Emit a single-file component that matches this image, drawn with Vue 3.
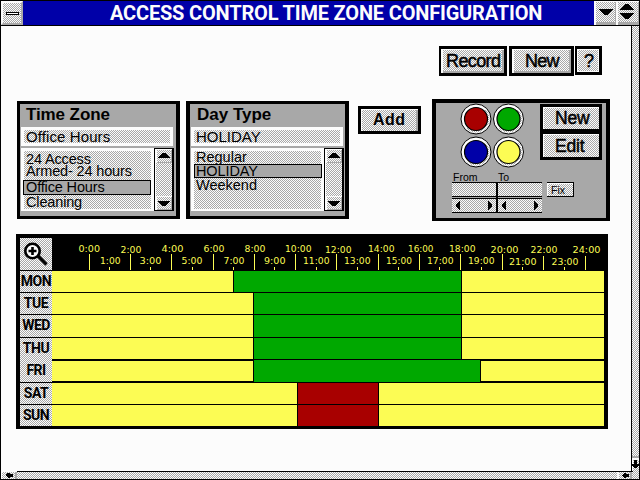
<script setup>
const zones = [
  { name: '24 Access', gap: 1 },
  { name: 'Armed- 24 hours', gap: -3 },
  { name: 'Office Hours', gap: 1, selected: true },
  { name: 'Cleaning', gap: 0 },
]
const dayTypes = [
  { name: 'Regular', gap: -1 },
  { name: 'HOLIDAY', gap: -1, selected: true },
  { name: 'Weekend', gap: 0 },
]
const lists = [
  { id: 'zones', title: 'Time Zone', value: 'Office Hours', items: zones },
  { id: 'types', title: 'Day Type', value: 'HOLIDAY', items: dayTypes },
]

const colors = [
  { name: 'red', fill: '#a80000', x: 16, y: 16 },
  { name: 'green', fill: '#00a800', x: 48.5, y: 16 },
  { name: 'blue', fill: '#0000a8', x: 16, y: 49 },
  { name: 'yellow', fill: '#fcfc54', x: 48.5, y: 49 },
]

// Axis marks: [label, left, width, tick x, vertical shift]
const major = [
  ['0:00', 78.5, 21.5, 89, 0], ['2:00', 120.5, 21, 130, 1], ['4:00', 161.5, 22, 171, 0],
  ['6:00', 203.5, 21, 213, 0], ['8:00', 244.5, 21, 254, 0], ['10:00', 285, 26.5, 295, 0],
  ['12:00', 325, 26.5, 336, 1], ['14:00', 368, 26.5, 378, 0], ['16:00', 408, 25.5, 419, 0],
  ['18:00', 449, 26.5, 460, 0], ['20:00', 490.5, 28, 502, 1], ['22:00', 530.5, 27, 543, 1],
  ['24:00', 572.5, 28, 585, 1],
]
const minor = [
  ['1:00', 100, 20.5, 109, 0], ['3:00', 139.5, 22, 150, 0], ['5:00', 181.5, 21, 192, 0],
  ['7:00', 223.5, 21, 233, 0], ['9:00', 264, 21.5, 274, 0], ['11:00', 303, 26.5, 316, 0],
  ['13:00', 344, 26.5, 357, 0], ['15:00', 386, 26, 398, 0], ['17:00', 427, 26.5, 439, 0],
  ['19:00', 468, 26.5, 481, 0], ['21:00', 509, 27.5, 522, 1], ['23:00', 551.5, 27, 564, 1],
]

// from / to are pixel offsets of the coloured interval inside the 552px track
const days = [
  { name: 'MON', from: 181, to: 410, kind: 'green' },
  { name: 'TUE', from: 201, to: 410, kind: 'green' },
  { name: 'WED', from: 201, to: 410, kind: 'green' },
  { name: 'THU', from: 201, to: 410, kind: 'green' },
  { name: 'FRI', from: 201, to: 429, kind: 'green' },
  { name: 'SAT', from: 245, to: 327, kind: 'red' },
  { name: 'SUN', from: 245, to: 327, kind: 'red' },
]
</script>

<template>
  <div class="window">
    <header class="titlebar">
      <button class="sys" aria-label="Menu"><i></i></button>
      <h1><span>ACCESS CONTROL TIME ZONE CONFIGURATION</span></h1>
      <button class="cap" aria-label="Minimize">
        <svg width="22" height="24" shape-rendering="crispEdges"><path d="M5 8H19V9L13 14H11L5 9Z" /></svg>
      </button>
      <button class="cap last" aria-label="Restore">
        <svg width="23" height="24" shape-rendering="crispEdges"><path d="M4 9V8L10 3H12L18 8V9ZM4 12H18V13L12 18H10L4 13Z" /></svg>
      </button>
    </header>

    <div class="body">
      <main>
        <div class="toolbar">
          <button class="btn record"><span>Record</span></button>
          <button class="btn new"><span>New</span></button>
          <button class="btn help"><span>?</span></button>
        </div>

        <div class="middle">
          <section v-for="l in lists" :key="l.id" class="panel" :class="l.id">
            <h2><span>{{ l.title }}</span></h2>
            <div class="field"><span>{{ l.value }}</span></div>
            <div class="listbox">
              <ul>
                <li v-for="i in l.items" :key="i.name" :class="{ selected: i.selected }" :style="{ marginTop: i.gap + 'px' }">
                  <span>{{ i.name }}</span>
                </li>
              </ul>
              <div class="scroll">
                <svg width="17" height="14" shape-rendering="crispEdges"><path d="M3 9V8L8 4H10L15 8V9Z" /></svg>
                <div class="track"></div>
                <svg width="17" height="14" shape-rendering="crispEdges"><path d="M3 5H15V6L10 10H8L3 6Z" /></svg>
              </div>
            </div>
          </section>

          <button class="add"><span>Add</span></button>

          <section class="palette">
            <div class="upper">
              <svg class="swatches" width="66" height="67">
                <defs>
                  <pattern id="dots" width="2" height="2" patternUnits="userSpaceOnUse">
                    <rect width="2" height="2" fill="#fcfcfc" />
                    <rect width="1" height="1" fill="#a8a8a8" /><rect x="1" y="1" width="1" height="1" fill="#a8a8a8" />
                  </pattern>
                </defs>
                <g v-for="c in colors" :key="c.name" stroke="#000">
                  <circle :cx="c.x" :cy="c.y" r="15" fill="#fcfcfc" />
                  <path :d="`M${c.x + 9.5} ${c.y - 9.5}A13.4 13.4 0 0 1 ${c.x - 9.5} ${c.y + 9.5}Z`" fill="url(#dots)" stroke="none" />
                  <circle :cx="c.x" :cy="c.y" r="11.5" :fill="c.fill" stroke-width="1.2" />
                </g>
              </svg>
              <div class="actions">
                <button><span>New</span></button>
                <button><span>Edit</span></button>
              </div>
            </div>
            <div class="range">
              <div v-for="r in ['From', 'To']" :key="r" class="bound">
                <label><span>{{ r }}</span></label>
                <div class="value"></div>
                <div class="spin">
                  <svg width="4" height="9" shape-rendering="crispEdges"><path d="M4 0V9H3L0 5V4L3 0Z" /></svg>
                  <svg width="4" height="9" shape-rendering="crispEdges"><path d="M0 0V9H1L4 5V4L1 0Z" /></svg>
                </div>
              </div>
              <button class="fix"><span>Fix</span></button>
            </div>
          </section>
        </div>

        <section class="schedule">
          <div class="axis">
            <div class="zoom">
              <svg width="32" height="32">
                <circle cx="12.5" cy="13" r="7.2" fill="#fcfcfc" stroke="#000" stroke-width="2.6" />
                <path d="M8.5 13H16.5M12.5 9V17" stroke="#000" stroke-width="2.6" fill="none" />
                <path d="M18 18L26.5 26.5" stroke="#000" stroke-width="3.2" />
              </svg>
            </div>
            <svg class="scale" width="552" height="33" viewBox="52 238 552 33">
              <g v-for="m in major" :key="m[0]">
                <text :x="m[1]" :y="251.5 + m[4]" :textLength="m[2]" lengthAdjust="spacingAndGlyphs">{{ m[0] }}</text>
                <rect :x="m[3]" :y="m[3] > 540 ? 256 : 254" width="1" :height="m[3] > 540 ? 14 : 16" />
              </g>
              <g v-for="m in minor" :key="m[0]">
                <text :x="m[1]" :y="263.5 + m[4]" :textLength="m[2]" lengthAdjust="spacingAndGlyphs">{{ m[0] }}</text>
                <rect :x="m[3]" y="267" width="1" height="3" />
              </g>
            </svg>
          </div>
          <div v-for="d in days" :key="d.name" class="day" :class="d.name.toLowerCase()">
            <div class="name"><span>{{ d.name }}</span></div>
            <div class="idle" :style="{ width: d.from + 'px' }"></div>
            <div class="active" :class="d.kind" :style="{ width: d.to - d.from + 'px' }"></div>
            <div class="idle rest"></div>
          </div>
        </section>
      </main>

      <div class="vscroll">
        <svg width="7" height="15" shape-rendering="crispEdges">
          <rect width="7" height="2" fill="#a8a8a8" />
          <path d="M0 2H7V4H1V15H0Z" fill="#fcfcfc" />
          <path d="M2 4H5V8H7V9L5 12H2L0 9V8H2Z" />
        </svg>
      </div>
    </div>

    <footer class="hscroll">
      <svg width="16" height="8" shape-rendering="crispEdges">
        <path d="M0 0H16V1H1V8H0Z" fill="#fcfcfc" /><rect x="14" y="1" width="2" height="7" fill="#a8a8a8" />
        <path d="M4 4L7 2V1.5H9V2.5H12V6H9V7H7V6Z" />
      </svg>
      <div class="lane"></div>
      <div class="end">
        <svg width="22" height="7" shape-rendering="crispEdges">
          <rect width="2" height="7" fill="#fcfcfc" /><rect x="13" width="2" height="7" fill="#a8a8a8" />
          <path d="M5 3L8 1H9V2H12V5H9V6H8L5 4Z" />
        </svg>
      </div>
    </footer>
  </div>
</template>

<style>
body { margin: 0; background: #fcfcfc; overflow: hidden; }
</style>

<style scoped>
* { box-sizing: border-box; margin: 0; padding: 0; }
.window {
  --dots: repeating-conic-gradient(#a8a8a8 0 25%, #fcfcfc 0 50%) 0 0 / 2px 2px;
  width: 640px; height: 480px; display: flex; flex-direction: column;
  border: 1px solid #000;
  background: #fcfcfc; color: #000;
  font-family: "Liberation Sans", Arial, sans-serif;
}
button { border: 0; border-radius: 0; font-family: inherit; color: inherit; background: none; }
span { white-space: nowrap; }
svg { display: block; flex: none; }

.titlebar { height: 25px; display: flex; background: #0000a8; border-bottom: 1px solid #000; flex: none; }
.titlebar h1 {
  flex: 1; color: #fcfcfc; font-family: Roboto, "Liberation Sans", sans-serif; font-size: 20px; line-height: 24px; font-weight: 700;
  letter-spacing: -0.18px; padding-left: 87px; overflow: hidden;
}
.sys {
  width: 22px; display: flex; align-items: center; justify-content: center;
  background: var(--dots); border: 2px solid #fcfcfc; border-right-color: #a8a8a8; border-bottom-color: #a8a8a8;
}
.sys i { width: 13px; height: 3px; background: #fcfcfc; border: 1px solid #000; }
.cap {
  width: 22px; background: var(--dots); display: flex;
  box-shadow: inset 2px 1px #fcfcfc, inset -1px -3px #a8a8a8;
}
.cap.last { width: 23px; }

.body { flex: 1; display: flex; min-height: 0; }
main { flex: 1; border-right: 1px solid #000; padding-top: 20px; }
.vscroll { width: 7px; background: var(--dots); display: flex; align-items: flex-end; }
.hscroll { height: 8px; display: flex; flex: none; overflow: hidden; background: var(--dots); }
.lane { flex: 1; border-top: 1px solid #000; }
.end { width: 22px; background: linear-gradient(#000, #000) 0 0 / 16px 1px no-repeat; padding-top: 1px; }

.toolbar { display: flex; padding-left: 438px; height: 30px; align-items: flex-start; }
.btn {
  height: 30px; border: 3px solid #000; background: var(--dots);
  box-shadow: inset 2px 1px #fcfcfc, inset -2px -2px #a8a8a8;
  font-size: 18px; line-height: 24px; text-align: left; -webkit-text-stroke: 0.5px #000;
}
.record { width: 68px; border-left-width: 2px; padding-left: 5px; letter-spacing: -0.6px; }
.new { width: 65px; margin-left: 2px; padding-left: 13px; letter-spacing: -0.8px; }
.help { width: 27px; height: 29px; margin-left: 1px; border-left-width: 2px; padding-left: 7px; box-shadow: inset 1px 1px #fcfcfc, inset -1px -1px #fcfcfc; }

.middle { display: flex; align-items: flex-start; margin-top: 23px; height: 122px; }
.panel {
  width: 163px; height: 118px; margin: 2px 0 0 16px; background: #a8a8a8;
  border: solid #000; border-width: 3px 4px 3px 3px;
}
.panel.types { margin-left: 6px; border-left-width: 4px; }
.panel h2 { height: 23px; line-height: 22px; font-size: 17px; padding-left: 6px; letter-spacing: -0.1px; }
.panel.types h2 { letter-spacing: 0; padding-left: 7px; }
.field {
  width: 152px; height: 19px; margin-left: 1px; border: 3px solid #fcfcfc; background: var(--dots);
  font-size: 15px; line-height: 13px; padding-left: 2px; letter-spacing: 0.1px;
}
.types .field { letter-spacing: 0; }
.listbox { display: flex; margin: 2px 0 0 1px; width: 153px; height: 63px; }
ul { list-style: none; display: flow-root; width: 133px; border: 3px solid #fcfcfc; border-bottom-width: 2px; background: var(--dots); font-size: 14.5px; letter-spacing: -0.15px; }
li { height: 15px; line-height: 15px; padding-left: 2px; white-space: nowrap; }
li.selected { border: 1px solid #000; background: #a8a8a8; height: 15px; line-height: 13px; margin-left: -1px; }
li.selected + li { height: 14px; line-height: 14px; }
.types li.selected { margin: 0 -1px 0 0; padding-left: 1px; letter-spacing: -0.1px; height: 14px; line-height: 12px; }
.types ul { letter-spacing: 0; }
.scroll {
  width: 20px; border: 1px solid #000; border-right-width: 2px; background: var(--dots);
  box-shadow: inset 1px 0 #fcfcfc; display: flex; flex-direction: column;
}
.scroll svg { background: var(--dots); box-shadow: inset 2px 1px #fcfcfc, inset -1px -1px #a8a8a8; }
.track { flex: 1; }

.add {
  width: 63px; height: 28px; margin: 7px 0 0 9px; border: 3px solid #000; background: var(--dots);
  box-shadow: inset 1px 1px #fcfcfc, inset -2px 0 #a8a8a8;
  font-size: 16px; font-weight: 700; line-height: 22px; text-align: left; padding-left: 12px; letter-spacing: 0.4px;
}

.palette { width: 178px; height: 122px; margin-left: 11px; background: #a8a8a8; border: 4px solid #000; border-bottom-width: 3px; }
.upper { display: flex; height: 66px; padding-left: 24px; }
.actions { width: 62px; height: 56px; margin: 1px 0 0 14px; border: 3px solid #000; background: #000; display: flex; flex-direction: column; gap: 5px; }
.actions button {
  width: 56px; height: 22px; background: var(--dots); box-shadow: inset 1px 1px #fcfcfc;
  font-size: 17.5px; line-height: 22px; text-align: left; padding-left: 12px; -webkit-text-stroke: 0.5px #000; letter-spacing: -0.2px;
}
.actions button + button { height: 23px; }
.range { display: flex; padding-left: 16px; }
.bound { width: 46px; border-left: 2px solid #000; }
.bound:first-child { width: 44px; border-left: 0; }
.bound label { display: block; height: 13px; line-height: 17px; font-size: 10.5px; background: #a8a8a8; margin-left: -2px; padding-left: 2px; }
.bound:first-child label { margin-left: 0; padding-left: 1px; }
.value { height: 15px; border: solid #000; border-width: 1px 0; background: var(--dots); }
.spin { height: 15px; margin-top: 1px; border: solid #000; border-width: 1px 0; background: var(--dots); display: flex; justify-content: space-between; align-items: center; padding: 0 4px; }
.fix {
  width: 27px; height: 15px; margin: 13px 0 0 5px; border: solid #000; border-width: 1px 1px 1px 0; background: var(--dots);
  box-shadow: inset 1px 1px #fcfcfc; font-size: 10.5px; line-height: 14px; text-align: left; padding-left: 4px;
}

.schedule { width: 592px; height: 195px; margin: 13px 0 0 15px; border: 4px solid #000; border-bottom-width: 3px; background: #000; }
.axis { display: flex; height: 33px; }
.zoom { width: 32px; height: 32px; background: var(--dots); }
.scale { fill: #fcfc54; font: 8.6px "DejaVu Sans", sans-serif; }
.day { display: flex; height: 22px; padding-bottom: 1px; }
.name { width: 32px; background: var(--dots); font-family: Roboto, "Liberation Sans", sans-serif; font-size: 14px; font-weight: 700; line-height: 20px; text-align: center; letter-spacing: -0.5px; }
.idle { background: #fcfc54; flex: none; }
.idle.rest { flex: 1; }
.active { border: solid #000; border-width: 0 1px; flex: none; }
.active.green { background: #00a800; }
.active.red { background: #a80000; }
.wed { height: 23px; }
.thu .name, .fri .name { height: 22px; }
.fri { height: 23px; }
.fri .idle { border-top: 1px solid #000; height: 21px; }
.fri .active { height: 22px; }
.sun { height: 21px; padding-bottom: 0; }
</style>
